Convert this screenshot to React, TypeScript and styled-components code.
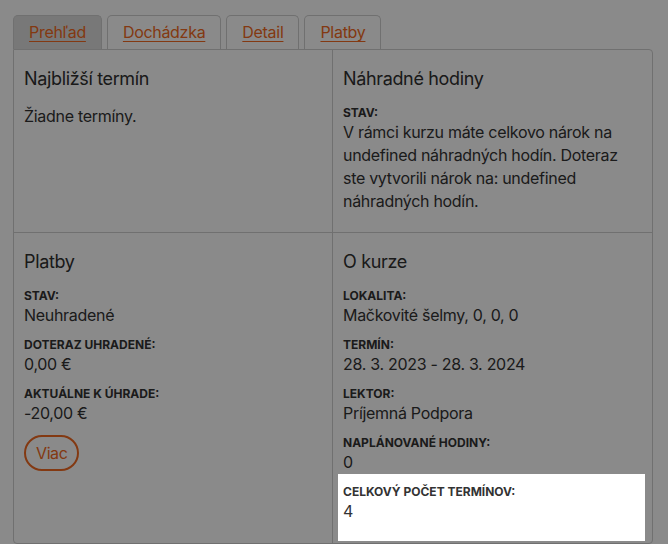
import React from "react";
import styled, { createGlobalStyle } from "styled-components";

const GlobalStyle = createGlobalStyle`
  html, body {
    margin: 0;
    padding: 0;
    background: #ffffff;
  }
  body {
    font-family: Inter, "Noto Sans", "Liberation Sans", sans-serif;
    color: #333333;
    overflow: hidden;
  }
`;

const Page = styled.div`
  width: 640px;
  padding: 15px 0 0 13px;
`;

const Tabs = styled.nav`
  display: flex;
  gap: 5px;
`;

const Tab = styled.a<{ $active?: boolean }>`
  display: block;
  height: 34px;
  box-sizing: border-box;
  padding: 0 15px;
  line-height: 33px;
  font-size: 16px;
  letter-spacing: -0.3px;
  color: #f26a22;
  text-decoration: underline;
  text-underline-offset: 3px;
  text-decoration-thickness: 1px;
  border: 1px solid #cfcfcf;
  border-bottom: none;
  border-radius: 5px 5px 0 0;
  background: ${(p) => (p.$active ? "#dedede" : "#ffffff")};
  cursor: pointer;
`;

const Card = styled.section`
  display: grid;
  grid-template-columns: 1fr 1fr;
  border: 1px solid #cfcfcf;
  border-radius: 0 4px 4px 4px;
`;

const Cell = styled.div<{ $right?: boolean; $bottom?: boolean }>`
  padding: 18px 10px ${(p) => (p.$bottom ? "10px" : "9px")};
  border-right: ${(p) => (p.$right ? "none" : "1px solid #cfcfcf")};
  border-bottom: ${(p) => (p.$bottom ? "none" : "1px solid #cfcfcf")};
`;

const Title = styled.h2`
  margin: 0 0 15px;
  font-size: 18px;
  line-height: 22px;
  font-weight: 400;
  letter-spacing: -0.35px;
  color: #303030;
`;

const Text = styled.p`
  margin: 2px 0 10px;
  font-size: 16px;
  line-height: 23px;
  letter-spacing: -0.3px;
`;

const Field = styled.div<{ $spot?: boolean }>`
  margin-bottom: 10px;
  position: ${(p) => (p.$spot ? "relative" : "static")};
  z-index: ${(p) => (p.$spot ? 1000 : "auto")};

  ${(p) =>
    p.$spot &&
    `
    &::before {
      content: "";
      position: absolute;
      top: -10px;
      left: -5px;
      right: -3px;
      bottom: -18px;
      background: #ffffff;
      z-index: -1;
      box-shadow: 0 0 0 2000px rgba(0, 0, 0, 0.46);
    }
  `}
`;

const Label = styled.div`
  font-size: 12px;
  line-height: 16px;
  font-weight: 700;
  text-transform: uppercase;
  color: #333333;
`;

const Value = styled.div`
  font-size: 16px;
  line-height: 23px;
  letter-spacing: -0.3px;
  color: #333333;
`;

const MoreButton = styled.button`
  height: 36px;
  padding: 0 10px;
  border: 2px solid #f26a22;
  border-radius: 18px;
  background: transparent;
  color: #f26a22;
  font-family: inherit;
  font-size: 16px;
  letter-spacing: -0.4px;
  cursor: pointer;
`;

type Info = { label: string; value: string; spot?: boolean };

const payments: Info[] = [
  { label: "Stav:", value: "Neuhradené" },
  { label: "Doteraz uhradené:", value: "0,00 €" },
  { label: "Aktuálne k úhrade:", value: "-20,00 €" },
];

const course: Info[] = [
  { label: "Lokalita:", value: "Mačkovité šelmy, 0, 0, 0" },
  { label: "Termín:", value: "28. 3. 2023 - 28. 3. 2024" },
  { label: "Lektor:", value: "Príjemná Podpora" },
  { label: "Naplánované hodiny:", value: "0" },
  { label: "Celkový počet termínov:", value: "4", spot: true },
];

const Fields = ({ items }: { items: Info[] }) => (
  <>
    {items.map((f) => (
      <Field key={f.label} $spot={f.spot}>
        <Label>{f.label}</Label>
        <Value>{f.value}</Value>
      </Field>
    ))}
  </>
);

const App: React.FC = () => {
  return (
    <>
      <GlobalStyle />
      <Page>
        <Tabs>
          <Tab $active>Prehľad</Tab>
          <Tab>Dochádzka</Tab>
          <Tab>Detail</Tab>
          <Tab>Platby</Tab>
        </Tabs>
        <Card>
          <Cell>
            <Title>Najbližší termín</Title>
            <Text>Žiadne termíny.</Text>
          </Cell>
          <Cell $right>
            <Title>Náhradné hodiny</Title>
            <Field>
              <Label>Stav:</Label>
              <Value>
                V rámci kurzu máte celkovo nárok na undefined náhradných hodín.
                Doteraz ste vytvorili nárok na: undefined náhradných hodín.
              </Value>
            </Field>
          </Cell>
          <Cell $bottom>
            <Title>Platby</Title>
            <Fields items={payments} />
            <MoreButton>Viac</MoreButton>
          </Cell>
          <Cell $right $bottom>
            <Title>O kurze</Title>
            <Fields items={course} />
          </Cell>
        </Card>
      </Page>
    </>
  );
};

export default App;
